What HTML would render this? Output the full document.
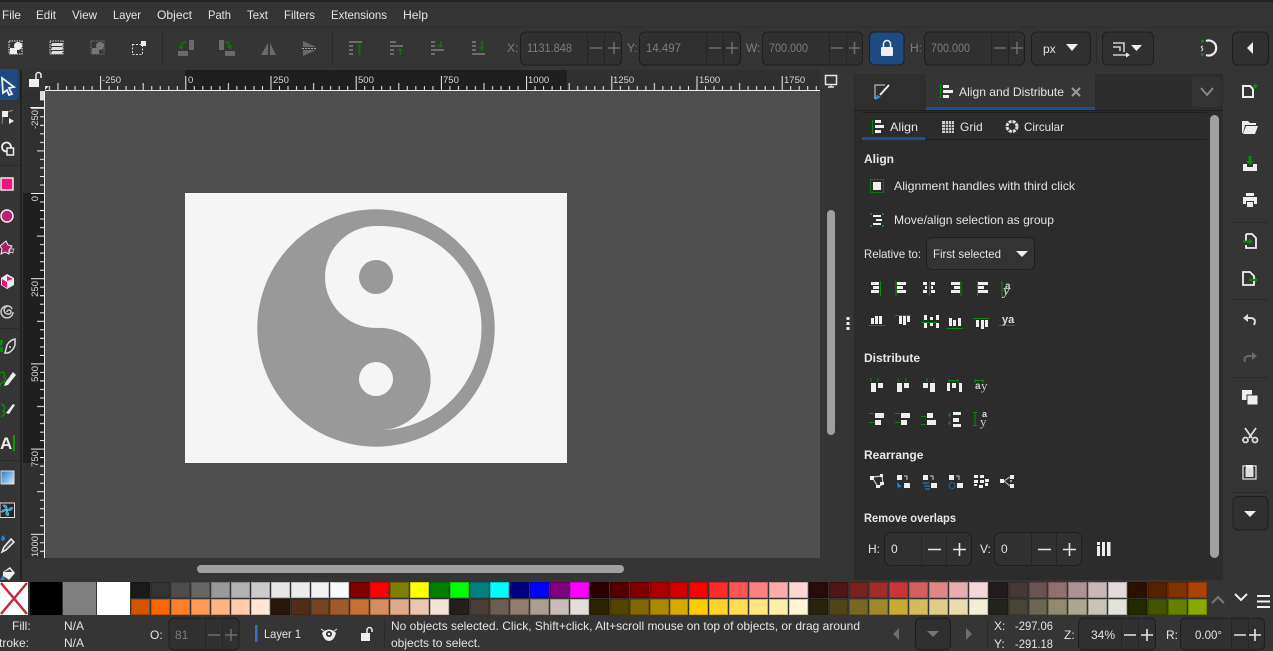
<!DOCTYPE html>
<html><head><meta charset="utf-8"><title>Inkscape</title>
<style>
html,body{margin:0;padding:0;background:#353535;width:1273px;height:651px;overflow:hidden}
svg{position:absolute;left:0;top:0}
text{font-family:"Liberation Sans",sans-serif;font-size:12px;fill:#e4e4e4}
.d{fill:#7d7d7d}
.b{font-weight:bold;fill:#e8e8e8}
.r{font-size:9.5px;fill:#d8d8d8}
.f{fill:#303030;stroke:#1e1e1e;stroke-width:1}
.w{fill:#eee}
.g{stroke:#0a8a0a;stroke-width:1;fill:none}
.sw{position:absolute;left:131px;top:582px;width:1077px;height:33px;display:grid;grid-template-columns:repeat(54,1fr);grid-template-rows:16px 16px;column-gap:0;row-gap:1px}
.sw i{display:block;margin-right:1px;box-shadow:inset 0 0 0 1px rgba(0,0,0,.2)}
</style></head><body>
<svg width="1273" height="651" viewBox="0 0 1273 651">
<defs>
<pattern id="hr" patternUnits="userSpaceOnUse" x="185.3" y="70" width="85.2" height="21"><path d="M.5 6V20M9 16V20M17.5 16V20M26 16V20M34.6 16V20M43.1 13V20M51.6 16V20M60.1 16V20M68.7 16V20M77.2 16V20" stroke="#f0f0f0" stroke-width="1" fill="none"/></pattern>
<pattern id="vr" patternUnits="userSpaceOnUse" x="23" y="193" width="22" height="85.2"><path d="M8 .5H21M17 9H21M17 17.5H21M17 26H21M17 34.6H21M14 43.1H21M17 51.6H21M17 60.1H21M17 68.7H21M17 77.2H21" stroke="#f0f0f0" stroke-width="1" fill="none"/></pattern>
</defs>
<!-- base -->
<rect width="1273" height="651" fill="#353535"/>
<rect width="1273" height="2" fill="#26241f"/>
<path d="M0 27H1273" stroke="#303030"/>
<!-- menu -->
<text x="2" y="19" textLength="19" lengthAdjust="spacingAndGlyphs">File</text><text x="36" y="19" textLength="20" lengthAdjust="spacingAndGlyphs">Edit</text><text x="72" y="19" textLength="25" lengthAdjust="spacingAndGlyphs">View</text><text x="113" y="19" textLength="28" lengthAdjust="spacingAndGlyphs">Layer</text><text x="157" y="19" textLength="35" lengthAdjust="spacingAndGlyphs">Object</text><text x="208" y="19" textLength="23" lengthAdjust="spacingAndGlyphs">Path</text><text x="247" y="19" textLength="21" lengthAdjust="spacingAndGlyphs">Text</text><text x="284" y="19" textLength="31" lengthAdjust="spacingAndGlyphs">Filters</text><text x="331" y="19" textLength="56" lengthAdjust="spacingAndGlyphs">Extensions</text><text x="403" y="19" textLength="25" lengthAdjust="spacingAndGlyphs">Help</text>
<!-- toolbar separators -->
<path d="M162.500 32V65M332.500 32V65M1096.500 32V65" stroke="#2b2b2b"/>
<!-- toolbar icons -->
<g>
<rect x="9" y="41" width="13" height="13" fill="none" stroke="#eee" stroke-dasharray="1.500 1"/><circle cx="18" cy="46" r="4" class="w"/><rect x="10" y="48" width="7" height="6" class="w"/>
<rect x="50" y="41" width="13" height="13" fill="none" stroke="#ddd" stroke-dasharray="1.500 1"/><path d="M52 43H63L62 46H51ZM52 47H63L62 50H51ZM52 51H63L62 54H51Z" fill="#ddd"/>
<g opacity=".35"><rect x="91" y="41" width="13" height="13" fill="none" stroke="#eee" stroke-dasharray="1.500 1"/><circle cx="100" cy="46" r="4" class="w"/><rect x="92" y="48" width="7" height="6" class="w"/></g>
<rect x="132.500" y="44.500" width="10" height="10" fill="none" stroke="#ddd" stroke-dasharray="2 1.500"/><rect x="141" y="41" width="5" height="5" class="w"/>
<g fill="#6a6a6a"><rect x="178" y="51" width="10" height="5"/><rect x="189" y="40" width="5" height="10"/><rect x="225" y="51" width="10" height="5"/><rect x="219" y="40" width="5" height="10"/><path d="M268 43V55H261ZM270 43V55H276Z"/><path d="M303 41L316 47H303ZM303 50H316L303 56Z"/></g>
<path d="M186 42Q181 42 181 48M225 42Q230 42 230 48" fill="none" stroke="#136b13" stroke-width="2"/><path d="M178 46L181 50L184 46ZM227 46L230 50L233 46Z" fill="#136b13"/>
<path d="M302 48.500H316" stroke="#aaa" stroke-dasharray="2 1"/>
<g fill="#6d6d6d"><rect x="349" y="41" width="13" height="2"/><rect x="349" y="45" width="4" height="2"/><rect x="349" y="49" width="4" height="2"/><rect x="349" y="53" width="4" height="2"/>
<rect x="390" y="41" width="6" height="2"/><rect x="390" y="45" width="13" height="2"/><rect x="390" y="49" width="4" height="2"/><rect x="390" y="53" width="4" height="2"/>
<rect x="431" y="41" width="4" height="2"/><rect x="431" y="45" width="4" height="2"/><rect x="431" y="49" width="13" height="2"/><rect x="431" y="53" width="4" height="2"/>
<rect x="472" y="41" width="4" height="2"/><rect x="472" y="45" width="4" height="2"/><rect x="472" y="49" width="4" height="2"/><rect x="472" y="53" width="13" height="2"/></g>
<g fill="#136b13"><path d="M358.500 55V47H357L359.500 44L362 47H360.500V55Z"/><path d="M399.500 55V51H397L400 48L403 51H401V55Z"/><path d="M440 41V45H437L440.500 48L444 45H442V41Z"/><path d="M481 41V47H478L481.500 51L485 47H483V41Z"/></g>
</g>
<!-- XYWH fields -->
<text x="507" y="52" class="d">X:</text><rect x="520.500" y="32" width="101" height="33" rx="5" class="f"/><text x="527" y="52" class="d" textLength="45" lengthAdjust="spacingAndGlyphs">1131.848</text>
<path d="M587.500 32V65M604.500 32V65" stroke="#262626"/><path d="M590 48H602M608 48H620M614 42V54" stroke="#6e6e6e" stroke-width="1.500"/>
<text x="627" y="52" class="d">Y:</text><rect x="639.500" y="32" width="101" height="33" rx="5" class="f"/><text x="646" y="52" class="d" textLength="35" lengthAdjust="spacingAndGlyphs">14.497</text>
<path d="M706.500 32V65M723.500 32V65" stroke="#262626"/><path d="M709 48H721M726 48H738M732 42V54" stroke="#6e6e6e" stroke-width="1.500"/>
<text x="746" y="52" class="d">W:</text><rect x="762.500" y="32" width="100" height="33" rx="5" class="f"/><text x="769" y="52" class="d" textLength="39" lengthAdjust="spacingAndGlyphs">700.000</text>
<path d="M829.500 32V65M846.500 32V65" stroke="#262626"/><path d="M831 48H843M849 48H860M854.500 42V54" stroke="#6e6e6e" stroke-width="1.500"/>
<rect x="869.500" y="32" width="34.500" height="33" rx="5" fill="#1d4a80" stroke="#1e1e1e"/><rect x="881" y="47" width="12" height="9" rx="1" class="w"/><path d="M883.500 47V44A3.500 3.500 0 0 1 890.500 44V47" fill="none" stroke="#eee" stroke-width="1.500"/>
<text x="910" y="52" class="d">H:</text><rect x="924.500" y="32" width="100" height="33" rx="5" class="f"/><text x="931" y="52" class="d" textLength="39" lengthAdjust="spacingAndGlyphs">700.000</text>
<path d="M991.500 32V65M1008.500 32V65" stroke="#262626"/><path d="M994 48H1006M1011 48H1023M1017 42V54" stroke="#6e6e6e" stroke-width="1.500"/>
<rect x="1031.500" y="32" width="59" height="33" rx="5" class="f"/><text x="1043" y="53">px</text><path d="M1066 44H1078L1072 51Z" class="w"/>
<rect x="1102.500" y="32" width="51" height="33" rx="5" class="f"/>
<path d="M1113 43H1124V52M1113 47H1120V51M1113 55H1126" fill="none" stroke="#eee" stroke-width="1.300"/><path d="M1126 52.500L1130 55L1126 57.500ZM1131 45H1142L1136.500 51Z" class="w"/>
<path d="M1206 41A7.500 7.500 0 1 1 1206 55" fill="none" stroke="#eee" stroke-width="2.200"/><rect x="1201" y="40" width="2.500" height="3" fill="#0a8a0a"/><rect x="1201" y="53" width="2.500" height="3" fill="#0a8a0a"/><path d="M1203 46Q1200 47 1202 48Q1204 50 1201 51" fill="none" stroke="#ddd"/>
<rect x="1232.500" y="32" width="36" height="33" rx="5" class="f"/><path d="M1253 42V54L1247 48Z" class="w"/>

<!-- left toolbar -->
<rect x="20" y="70" width="2" height="510" fill="#222"/>
<rect x="-4" y="69" width="22.500" height="31" rx="4" fill="#1d4a80"/>
<path d="M2 78L14 87L9 88L12 94L9 95L7 90L3 93Z" fill="#1d4a80" stroke="#eee" stroke-width="1.800"/>
<path d="M2 124L3 114L13 110" fill="none" stroke="#888"/><rect x="2" y="111" width="6" height="6" class="w"/><path d="M9 118L14 121L9 124Z" class="w"/>
<circle cx="6.500" cy="147" r="4.500" fill="none" stroke="#eee" stroke-width="1.800"/><rect x="7" y="148" width="6.500" height="7" fill="#333" stroke="#eee" stroke-width="1.500"/>
<rect x="1" y="178" width="12" height="12" fill="#f5117d" stroke="#eee" stroke-width="1.500"/>
<circle cx="7" cy="216" r="6" fill="#bd1e72" stroke="#eee" stroke-width="1.500"/>
<path d="M6 241L8 245L12 246L9 250L9 254L5 252L1 254L2 249L0 246Z" fill="#b01a6a" stroke="#eee"/><path d="M11 247L12 249L14 249L13 251L13 253L11 252L9 253L10 250Z" fill="#6b2a50" stroke="#ddd" stroke-width=".7"/>
<path d="M7 274L14 278V285L7 289L1 285V278Z" fill="#eee"/><path d="M2 279L7 282V288L2 285ZM7 276L13 279L7 281Z" fill="#f5117d"/>
<path d="M7 312m0 0a2 2 0 1 1 2 2a4 4 0 1 1 3-5m1 3a6 6 0 1 1-5-6" fill="none" stroke="#ccc" stroke-width="1.500"/>
<path d="M5 353L7 345Q10 340 15 339L15 345Q13 351 8 353Z" fill="#333" stroke="#ddd" stroke-width="1.500"/><circle cx="10" cy="347" r="1" fill="#ddd"/><path d="M0 340Q3 339 3 342L2 346H0ZM0 347H3V352H0Z" fill="#0a8a0a"/>
<path d="M5 383L13 372L16 375L8 385L4 386Z" class="w"/><path d="M0 373Q6 370 4 377Q9 380 1 383M1 383L0 386" fill="none" stroke="#0a8a0a" stroke-width="1.500"/>
<path d="M6 413L13 404L15 405L9 414Z" class="w"/><path d="M1 404Q7 406 3 411Q7 413 1 417" fill="none" stroke="#0a8a0a" stroke-width="1.500"/>
<text x="0" y="449" style="font-size:17px;font-weight:bold;fill:#eee">A</text><rect x="13" y="435" width="2" height="16" fill="#0a9a0a"/>
<defs><linearGradient id="gr" x1="0" y1="0" x2="1" y2="1"><stop offset="0" stop-color="#1a7fd0"/><stop offset="1" stop-color="#d5e9f7"/></linearGradient></defs>
<rect x="1" y="471" width="13" height="13" fill="url(#gr)" stroke="#ddd"/>
<rect x="0" y="503" width="14.500" height="14.500" fill="#262626" stroke="#ddd"/><path d="M7 510Q2 505 3 505Q8 504 7 510Q12 506 13 508Q11 512 7 510Q10 515 8 516Q4 515 7 510Q2 513 1 512Q3 508 7 510Z" fill="#2f9ae0" stroke="#aee" stroke-width=".4"/>
<path d="M4 547L11 539L14 542L6 550L2 552Z" fill="#555" stroke="#eee" stroke-width="1.500"/><path d="M3 535Q0 539 2 541Q5 541 5 538Z" fill="#2288dd"/>
<path d="M3 572L10 567L15 573L9 580L3 576Z" class="w"/><path d="M4 572L10 569L12 572Z" fill="#444"/><path d="M0 580L3 575L5 580Z" fill="#2288dd"/>
<path d="M0 165.500H19M0 328.500H19M0 460.500H19" stroke="#2a2a2a"/>

<!-- rulers -->
<rect x="23" y="70" width="797" height="21" fill="#303030"/>
<rect x="23" y="70" width="22" height="488" fill="#303030"/>
<rect x="185" y="70" width="382" height="20" fill="#1f1f1f"/>
<rect x="23" y="193" width="21" height="270" fill="#1f1f1f"/>
<rect x="45" y="70" width="775" height="21" fill="url(#hr)"/>
<rect x="23" y="91" width="22" height="467" fill="url(#vr)"/>
<path d="M45 90.500H820M44.500 91V558" stroke="#f0f0f0"/>
<text x="102" y="83" class="r">-250</text><text x="188" y="83" class="r">0</text><text x="273" y="83" class="r">250</text><text x="358" y="83" class="r">500</text><text x="443" y="83" class="r">750</text><text x="528" y="83" class="r">1000</text><text x="613" y="83" class="r">1250</text><text x="699" y="83" class="r">1500</text><text x="784" y="83" class="r">1750</text>
<g text-anchor="end">
<text transform="translate(38 110) rotate(-90)" class="r">-250</text>
<text transform="translate(38 196) rotate(-90)" class="r">0</text>
<text transform="translate(38 281) rotate(-90)" class="r">250</text>
<text transform="translate(38 366) rotate(-90)" class="r">500</text>
<text transform="translate(38 451) rotate(-90)" class="r">750</text>
<text transform="translate(38 536) rotate(-90)" class="r">1000</text>
</g>
<rect x="23" y="70" width="22" height="21" fill="#333"/>
<rect x="29" y="79" width="10" height="8" class="w"/><path d="M36 79V75A2.500 2.500 0 0 1 41 75V78" fill="none" stroke="#eee" stroke-width="1.500"/>
<path d="M45 86H49L45 90ZM40 92H45V100L40 100Z" fill="#eee" opacity=".9"/><path d="M30 107.500H44" stroke="#eee"/>

<!-- canvas -->
<rect x="45" y="91" width="775" height="467" fill="#4f4f4f"/>
<rect x="185" y="193" width="382" height="270" fill="#f6f5f6"/>
<circle cx="376" cy="328" r="118.700" fill="#999"/>
<path d="M376 226A102 102 0 0 1 383 430A51 51 0 0 0 376 328A51 51 0 0 1 376 226Z" fill="#f6f5f6"/>
<circle cx="376" cy="277" r="17" fill="#999"/>
<circle cx="376" cy="379" r="17" fill="#f6f5f6"/>
<!-- scrollbars -->
<rect x="197" y="565" width="427" height="8" rx="4" fill="#a0a0a0"/>
<rect x="827" y="210" width="8" height="225" rx="4" fill="#a0a0a0"/>
<path d="M825.500 75.500H836.500V84.500H825.500Z" fill="none" stroke="#e6e6e6" stroke-width="1.500"/><path d="M828 87H834" stroke="#e6e6e6" stroke-width="1.500"/><path d="M831 85V87" stroke="#e6e6e6"/>
<rect x="846.500" y="317" width="3" height="3" class="w"/><rect x="846.500" y="322" width="3" height="3" class="w"/><rect x="846.500" y="327" width="3" height="3" class="w"/>

<!-- panel -->
<rect x="854" y="74" width="369" height="506" fill="#2c2c2c"/>
<rect x="854" y="74" width="72" height="36" fill="#2e2e2e"/>
<rect x="926" y="74" width="169" height="33" fill="#363636"/>
<rect x="926" y="107" width="169" height="4" fill="#1b5294"/>
<rect x="1192" y="77" width="30" height="30" rx="4" fill="#333"/>
<path d="M854 110.500H1223" stroke="#1f1f1f"/>
<path d="M1201 88L1207 95L1213 88" fill="none" stroke="#888" stroke-width="2"/>
<path d="M875 99V85H885" fill="none" stroke="#bbb" stroke-width="1.200"/><path d="M889 85L880 95" fill="none" stroke="#eee" stroke-width="2"/><path d="M875 100L877 95L881 97Z" fill="#2e8fd8"/>
<path d="M940.500 84V98" stroke="#0a8a0a"/><rect x="943" y="85" width="6" height="3" class="w"/><rect x="943" y="90" width="10" height="3" class="w"/><rect x="943" y="95" width="6" height="3" class="w"/>
<text x="959" y="96" textLength="105" lengthAdjust="spacingAndGlyphs">Align and Distribute</text>
<path d="M1072 88L1080 96M1080 88L1072 96" stroke="#999" stroke-width="2"/>
<path d="M862 112.500H1207M862 139.500H1207" stroke="#1f1f1f"/>
<rect x="862" y="137" width="63" height="3" fill="#1b5294"/>
<path d="M872.500 120V134" stroke="#0a8a0a"/><rect x="875" y="120" width="6" height="3" class="w"/><rect x="875" y="125" width="9" height="3" class="w"/><rect x="875" y="130" width="6" height="3" class="w"/>
<text x="890" y="131" textLength="28" lengthAdjust="spacingAndGlyphs">Align</text>
<rect x="942" y="121" width="12" height="12" fill="#ccc"/><path d="M945.500 121V133M948.500 121V133M951.500 121V133M942 124.500H954M942 127.500H954M942 130.500H954" stroke="#333" stroke-width=".8"/>
<text x="960" y="131">Grid</text>
<circle cx="1012" cy="126.500" r="5" fill="none" stroke="#ddd" stroke-width="3" stroke-dasharray="3 1"/>
<text x="1024" y="131" textLength="40" lengthAdjust="spacingAndGlyphs">Circular</text>
<rect x="1210" y="115" width="9" height="443" rx="4.500" fill="#a0a0a0"/>
<text x="864" y="163" class="b">Align</text>
<rect x="870.500" y="179.500" width="13" height="13" fill="none" stroke="#0a8a0a" stroke-dasharray="2 1"/><rect x="873" y="182" width="8" height="8" class="w"/>
<text x="894" y="190" textLength="181" lengthAdjust="spacingAndGlyphs">Alignment handles with third click</text>
<g fill="#0a8a0a"><rect x="870" y="213" width="2" height="2"/><rect x="882" y="213" width="2" height="2"/><rect x="870" y="225" width="2" height="2"/><rect x="882" y="225" width="2" height="2"/></g>
<rect x="873" y="215" width="8" height="2" class="w"/><rect x="876" y="219" width="6" height="2" class="w"/><rect x="873" y="223" width="8" height="2" class="w"/>
<text x="894" y="224" textLength="160" lengthAdjust="spacingAndGlyphs">Move/align selection as group</text>
<text x="864" y="258" textLength="57" lengthAdjust="spacingAndGlyphs">Relative to:</text>
<rect x="926.500" y="237.500" width="108" height="32" rx="5" fill="#333" stroke="#1e1e1e"/>
<text x="933" y="258" textLength="68" lengthAdjust="spacingAndGlyphs">First selected</text><path d="M1016 251H1028L1022 257Z" class="w"/>
<!-- align row 1 -->
<g class="w">
<rect x="871" y="282" width="8" height="3"/><rect x="873" y="286" width="6" height="3"/><rect x="871" y="290" width="8" height="3"/>
<rect x="897" y="282" width="9" height="3"/><rect x="897" y="286" width="6" height="3"/><rect x="897" y="290" width="9" height="3"/>
<rect x="923" y="282" width="4" height="3"/><rect x="931" y="282" width="4" height="3"/><rect x="925" y="286" width="2" height="3"/><rect x="931" y="286" width="2" height="3"/><rect x="923" y="290" width="4" height="3"/><rect x="931" y="290" width="4" height="3"/>
<rect x="951" y="282" width="9" height="3"/><rect x="954" y="286" width="6" height="3"/><rect x="951" y="290" width="9" height="3"/>
<rect x="978" y="282" width="10" height="3"/><rect x="978" y="286" width="6" height="3"/><rect x="978" y="290" width="10" height="3"/>
<!-- align row 2 -->
<rect x="871" y="318" width="3" height="6"/><rect x="875" y="316" width="3" height="8"/><rect x="879" y="316" width="3" height="8"/>
<rect x="899" y="316" width="3" height="8"/><rect x="903" y="316" width="3" height="9"/><rect x="907" y="316" width="3" height="6"/>
<rect x="924" y="315" width="3" height="5"/><rect x="930" y="317" width="3" height="3"/><rect x="936" y="315" width="3" height="5"/><rect x="924" y="323" width="3" height="5"/><rect x="930" y="323" width="3" height="3"/><rect x="936" y="323" width="3" height="5"/>
<rect x="949" y="318" width="3" height="8"/><rect x="953" y="320" width="3" height="6"/><rect x="958" y="318" width="3" height="8"/>
<rect x="976" y="320" width="3" height="7"/><rect x="981" y="320" width="3" height="9"/><rect x="985" y="320" width="3" height="7"/>
</g>
<g class="g">
<path d="M880.500 281V296M896 281V296M929.500 281V296M961 281V296M977.500 281V296M1002 281V296"/>
<path d="M869 325.500H885M895 315.500H911M921 322.500H937M947 328.500H963M973 318.500H989M999 325.500H1015"/>
</g>
<text x="1005" y="289" style="font-size:10px;font-weight:bold;fill:#ccc">a</text>
<text x="1003" y="295" style="font-size:15px;font-family:'Liberation Serif',serif;font-style:italic;fill:#ddd">y</text>
<text x="1002" y="323" style="font-size:11px;font-weight:bold;fill:#ddd">ya</text>
<!-- distribute -->
<text x="864" y="362" class="b">Distribute</text>
<g class="w">
<rect x="871" y="383" width="5" height="9"/><rect x="878" y="383" width="5" height="5"/>
<rect x="897" y="383" width="5" height="9"/><rect x="904" y="383" width="5" height="5"/>
<rect x="923" y="383" width="5" height="5"/><rect x="930" y="383" width="5" height="9"/>
<rect x="947" y="383" width="3" height="8"/><rect x="952" y="383" width="4" height="5"/><rect x="959" y="383" width="3" height="9"/>
<rect x="875" y="413" width="9" height="5"/><rect x="875" y="420" width="6" height="5"/>
<rect x="901" y="413" width="9" height="5"/><rect x="901" y="420" width="6" height="5"/>
<rect x="927" y="413" width="6" height="5"/><rect x="927" y="420" width="9" height="5"/>
<rect x="953" y="412" width="8" height="3"/><rect x="953" y="418" width="6" height="4"/><rect x="953" y="424" width="8" height="3"/>
</g>
<g class="g">
<path d="M871 378V382M878 378V382M898 378V382M906 378V382M927 378V382M934 378V382M949 379V383M958 379V383M949 380.500H958M975 379V383M983 379V383M975 380.500H983"/>
<path d="M869 413.500H874M869 422.500H874M895 413.500H900M895 422.500H900M921 416.500H926M921 424.500H926M949.500 413V417M949.500 421V425M948 415H951M948 423H951M975 412V426M973 412.500H977M973 425.500H977"/>
</g>
<text x="975" y="389" style="font-size:10px;font-weight:bold;fill:#ccc">a</text><text x="981" y="390" style="font-size:13px;font-family:'Liberation Serif',serif;fill:#ccc">y</text>
<text x="982" y="417" style="font-size:9px;font-weight:bold;fill:#ddd">a</text><text x="980" y="426" style="font-size:13px;font-family:'Liberation Serif',serif;fill:#ccc">y</text>
<!-- rearrange -->
<text x="864" y="459" class="b">Rearrange</text>
<g class="w">
<path d="M872 477L882 476L883 484L878 487Z" fill="none" stroke="#ccc" stroke-width="1.200"/>
<rect x="870" y="476" width="4" height="4"/><rect x="880" y="474" width="3" height="3"/><rect x="876" y="485" width="4" height="3"/><rect x="880" y="482" width="4" height="3"/>
<rect x="897" y="475" width="5" height="5"/><rect x="904" y="483" width="6" height="5"/>
<rect x="923" y="475" width="5" height="5"/><rect x="931" y="483" width="6" height="5"/>
<rect x="949" y="475" width="5" height="5"/><rect x="957" y="483" width="6" height="5"/>
<rect x="974" y="475" width="4" height="3"/><rect x="980" y="475" width="4" height="3"/><rect x="974" y="480" width="4" height="3"/><rect x="980" y="480" width="4" height="3"/><rect x="985" y="479" width="4" height="3"/><rect x="979" y="485" width="4" height="3"/><rect x="974" y="484" width="3" height="2"/><rect x="985" y="483" width="3" height="3"/>
<rect x="1000" y="479" width="4" height="4"/><rect x="1010" y="475" width="4" height="4"/><rect x="1010" y="484" width="4" height="4"/><rect x="1010" y="480" width="2" height="2" opacity=".6"/>
</g>
<path d="M1004 481L1010 477M1004 481L1010 486" stroke="#ccc" fill="none"/>
<path d="M897 482L902 487L899 487L898 489Z" fill="#1a8fe0"/><path d="M923 483H929M924 486H930M925 489H930" stroke="#1a8fe0"/><circle cx="952" cy="485.500" r="3" fill="none" stroke="#1a6fb0" stroke-width="1.300" stroke-dasharray="2 1"/>
<path d="M904 476H907V480M930 476H933V480M956 476H959V480" fill="none" stroke="#ccc"/>
<!-- remove overlaps -->
<text x="864" y="522" class="b" textLength="92" lengthAdjust="spacingAndGlyphs">Remove overlaps</text>
<text x="868" y="553">H:</text><rect x="884.500" y="532.500" width="87" height="33" rx="6" class="f"/><text x="891" y="553" fill="#ddd">0</text>
<path d="M921.500 533V565M946.500 533V565" stroke="#262626"/><path d="M928 549.500H941M953 549.500H966M959.500 543V556" stroke="#e6e6e6" stroke-width="1.600"/>
<text x="980" y="553">V:</text><rect x="994.500" y="532.500" width="87" height="33" rx="6" class="f"/><text x="1001" y="553" fill="#ddd">0</text>
<path d="M1031.500 533V565M1056.500 533V565" stroke="#262626"/><path d="M1038 549.500H1051M1063 549.500H1076M1069.500 543V556" stroke="#e6e6e6" stroke-width="1.600"/>
<g class="w"><rect x="1097" y="546" width="3" height="10"/><rect x="1097" y="542" width="3" height="3"/><rect x="1102" y="542" width="3" height="14"/><rect x="1107" y="542" width="3.500" height="14"/></g>

<!-- right toolbar -->
<path d="M1232 222.500H1268M1232 299.500H1268M1232 377.500H1268M1232 492.500H1268" stroke="#2b2b2b"/>
<path d="M1243 86H1250L1253 89V97H1243Z" fill="none" stroke="#eee" stroke-width="2"/><path d="M1255 83L1256 85L1258 85.500L1256.500 87L1257 89L1255 88L1253 89L1253.500 87L1252 85.500L1254 85Z" fill="#0a8a0a"/>
<path d="M1242 121H1248L1250 123H1256V125H1245L1243 133H1242Z" class="w"/><path d="M1246 126H1258L1255 134H1243Z" class="w"/>
<path d="M1243 164V171H1257V164H1253V167H1247V164Z" class="w"/><path d="M1248.500 156H1251.500V161H1254L1250 165L1246 161H1248.500Z" fill="#0a8a0a"/>
<path d="M1246 193H1254V196H1246ZM1243 197H1257V204H1254V201H1246V204H1243ZM1247 202H1253V207H1247Z" class="w"/>
<path d="M1246 234H1252L1256 238V248H1246V245M1246 241V234" fill="none" stroke="#eee" stroke-width="1.800"/><path d="M1243 241.500H1250" stroke="#0a8a0a" stroke-width="2"/><path d="M1249 238.500L1253 241.500L1249 244.500Z" fill="#0a8a0a"/>
<path d="M1243 272H1250L1254 276V285H1243Z" fill="none" stroke="#eee" stroke-width="1.800"/><path d="M1249 280H1257" stroke="#0a8a0a" stroke-width="2"/><path d="M1255 277L1258 280L1255 283Z" fill="#0a8a0a"/>
<path d="M1254 325Q1257 318 1250 318H1246" fill="none" stroke="#ddd" stroke-width="2"/><path d="M1243 318L1248 314V322Z" fill="#ddd"/>
<path d="M1245 362Q1243 356 1250 356H1253" fill="none" stroke="#6a6a6a" stroke-width="2"/><path d="M1257 356L1252 352V360Z" fill="#6a6a6a"/>
<rect x="1242" y="390" width="10" height="10" class="w"/><rect x="1247" y="395" width="11" height="10" fill="#eee" stroke="#353535"/>
<path d="M1245 428L1252 438M1256 428L1249 438" stroke="#ddd" stroke-width="1.800"/><circle cx="1245.500" cy="440" r="2.500" fill="none" stroke="#ddd" stroke-width="1.800"/><circle cx="1255" cy="440" r="2.500" fill="none" stroke="#ddd" stroke-width="1.800"/>
<rect x="1243" y="466" width="13" height="13" fill="none" stroke="#ddd" stroke-width="1.300"/><path d="M1245.500 468H1253.500V477H1245.500Z" fill="#ddd"/><rect x="1246" y="465" width="7" height="3" class="w"/>
<rect x="1233" y="496.500" width="35" height="33.500" rx="5" class="f"/><path d="M1244 511H1256L1250 517Z" class="w"/>

<!-- swatches left -->
<rect x="0" y="582" width="28" height="33" fill="#fff"/>
<path d="M1 583L27 614M27 583L1 614" stroke="#c5283d" stroke-width="2.500"/>
<rect x="30" y="582" width="32" height="33" fill="#000"/>
<rect x="63" y="582" width="33" height="33" fill="#808080"/>
<rect x="97" y="582" width="33" height="33" fill="#fff"/>
<!-- swatch controls -->
<path d="M1212 603L1218 597L1224 603" fill="none" stroke="#777" stroke-width="2"/>
<path d="M1235 594L1241 600L1247 594" fill="none" stroke="#eee" stroke-width="2"/>
<path d="M1257 596H1270M1257 601.500H1270M1257 607H1270" stroke="#eee" stroke-width="2"/>

<!-- status -->
<text x="12" y="630">Fill:</text><text x="-9" y="647">Stroke:</text>
<text x="64" y="630">N/A</text><text x="64" y="647">N/A</text>
<text x="150" y="639">O:</text>
<rect x="169" y="618" width="70" height="32" rx="5" class="f"/><text x="175" y="639" class="d">81</text>
<path d="M205.500 618V650M222.500 618V650" stroke="#262626"/><path d="M208 635H220M225 635H237M231 629V641" stroke="#6e6e6e" stroke-width="1.500"/>
<rect x="255" y="625" width="2.500" height="17" fill="#3b6dbd"/>
<text x="264" y="638" textLength="37" lengthAdjust="spacingAndGlyphs">Layer 1</text>
<path d="M322 633Q329 626 336 633Q334 641 329 641Q324 641 322 633Z" class="w"/><circle cx="329" cy="634" r="3" fill="#333"/><circle cx="329" cy="634" r="1.300" class="w"/><path d="M321 629L324 631M337 629L334 631" stroke="#eee"/>
<rect x="361" y="633" width="9" height="8" class="w"/><path d="M367 633V630A2.500 2.500 0 0 1 372 630V632" fill="none" stroke="#eee" stroke-width="1.500"/>
<path d="M384.500 620V648M987.500 620V648" stroke="#2b2b2b"/>
<text x="391" y="630" textLength="469" lengthAdjust="spacingAndGlyphs">No objects selected. Click, Shift+click, Alt+scroll mouse on top of objects, or drag around</text>
<text x="391" y="647">objects to select.</text>
<path d="M899 628V640L893 634Z" fill="#6e6e6e"/>
<rect x="915.500" y="618" width="35" height="32" rx="5" class="f"/><path d="M927 631H939L933 637Z" fill="#777"/>
<path d="M966 628V640L972 634Z" fill="#6e6e6e"/>
<text x="994" y="630">X:</text><text x="1015" y="630" textLength="38" lengthAdjust="spacingAndGlyphs">-297.06</text>
<text x="994" y="648">Y:</text><text x="1015" y="648" textLength="38" lengthAdjust="spacingAndGlyphs">-291.18</text>
<text x="1064" y="639">Z:</text>
<rect x="1078.500" y="618" width="77" height="32" rx="5" class="f"/><text x="1091" y="639">34%</text>
<path d="M1121.500 618V650M1138.500 618V650" stroke="#262626"/><path d="M1124 635H1136M1141 635H1153M1147 629V641" stroke="#e6e6e6" stroke-width="1.600"/>
<text x="1166" y="639">R:</text>
<rect x="1180.500" y="618" width="84" height="32" rx="5" class="f"/><text x="1195" y="639" textLength="27" lengthAdjust="spacingAndGlyphs">0.00°</text>
<path d="M1231.500 618V650M1248.500 618V650" stroke="#262626"/><path d="M1234 635H1246M1249 635H1261M1255 629V641" stroke="#e6e6e6" stroke-width="1.600"/>
</svg>
<div class="sw">
<i style="background:#1a1a1a"></i><i style="background:#333333"></i><i style="background:#4d4d4d"></i><i style="background:#666666"></i><i style="background:#999999"></i><i style="background:#b3b3b3"></i><i style="background:#cccccc"></i><i style="background:#e6e6e6"></i><i style="background:#ececec"></i><i style="background:#f2f2f2"></i><i style="background:#f9f9f9"></i><i style="background:#800000"></i><i style="background:#ff0000"></i><i style="background:#808000"></i><i style="background:#ffff00"></i><i style="background:#008000"></i><i style="background:#00ff00"></i><i style="background:#008080"></i><i style="background:#00ffff"></i><i style="background:#000080"></i><i style="background:#0000ff"></i><i style="background:#800080"></i><i style="background:#ff00ff"></i><i style="background:#2b0000"></i><i style="background:#550000"></i><i style="background:#800000"></i><i style="background:#aa0000"></i><i style="background:#d40000"></i><i style="background:#ff0000"></i><i style="background:#ff2a2a"></i><i style="background:#ff5555"></i><i style="background:#ff8080"></i><i style="background:#ffaaaa"></i><i style="background:#ffd5d5"></i><i style="background:#280b0b"></i><i style="background:#501616"></i><i style="background:#782121"></i><i style="background:#a02c2c"></i><i style="background:#c83737"></i><i style="background:#d35f5f"></i><i style="background:#de8787"></i><i style="background:#e9afaf"></i><i style="background:#f4d7d7"></i><i style="background:#241c1c"></i><i style="background:#483737"></i><i style="background:#6c5353"></i><i style="background:#916f6f"></i><i style="background:#ac9393"></i><i style="background:#c8b7b7"></i><i style="background:#e3dbdb"></i><i style="background:#2b1100"></i><i style="background:#552200"></i><i style="background:#803300"></i><i style="background:#aa4400"></i>
<i style="background:#d45500"></i><i style="background:#ff6600"></i><i style="background:#ff7f2a"></i><i style="background:#ff9955"></i><i style="background:#ffb380"></i><i style="background:#ffccaa"></i><i style="background:#ffe6d5"></i><i style="background:#28170b"></i><i style="background:#502d16"></i><i style="background:#784421"></i><i style="background:#a05a2c"></i><i style="background:#c87137"></i><i style="background:#d38d5f"></i><i style="background:#deaa87"></i><i style="background:#e9c6af"></i><i style="background:#f4e3d7"></i><i style="background:#241f1c"></i><i style="background:#483e37"></i><i style="background:#6c5d53"></i><i style="background:#917c6f"></i><i style="background:#ac9d93"></i><i style="background:#c8beb7"></i><i style="background:#e3dedb"></i><i style="background:#2b2200"></i><i style="background:#554400"></i><i style="background:#806600"></i><i style="background:#aa8800"></i><i style="background:#d4aa00"></i><i style="background:#ffcc00"></i><i style="background:#ffd42a"></i><i style="background:#ffdd55"></i><i style="background:#ffe680"></i><i style="background:#ffeeaa"></i><i style="background:#fff6d5"></i><i style="background:#28220b"></i><i style="background:#504416"></i><i style="background:#786721"></i><i style="background:#a0892c"></i><i style="background:#c8ab37"></i><i style="background:#d3bc5f"></i><i style="background:#decd87"></i><i style="background:#e9ddaf"></i><i style="background:#f4eed7"></i><i style="background:#24221c"></i><i style="background:#484537"></i><i style="background:#6c6753"></i><i style="background:#918a6f"></i><i style="background:#aca793"></i><i style="background:#c8c4b7"></i><i style="background:#e3e2db"></i><i style="background:#222b00"></i><i style="background:#445500"></i><i style="background:#668000"></i><i style="background:#88aa00"></i>
</div>
</body></html>
